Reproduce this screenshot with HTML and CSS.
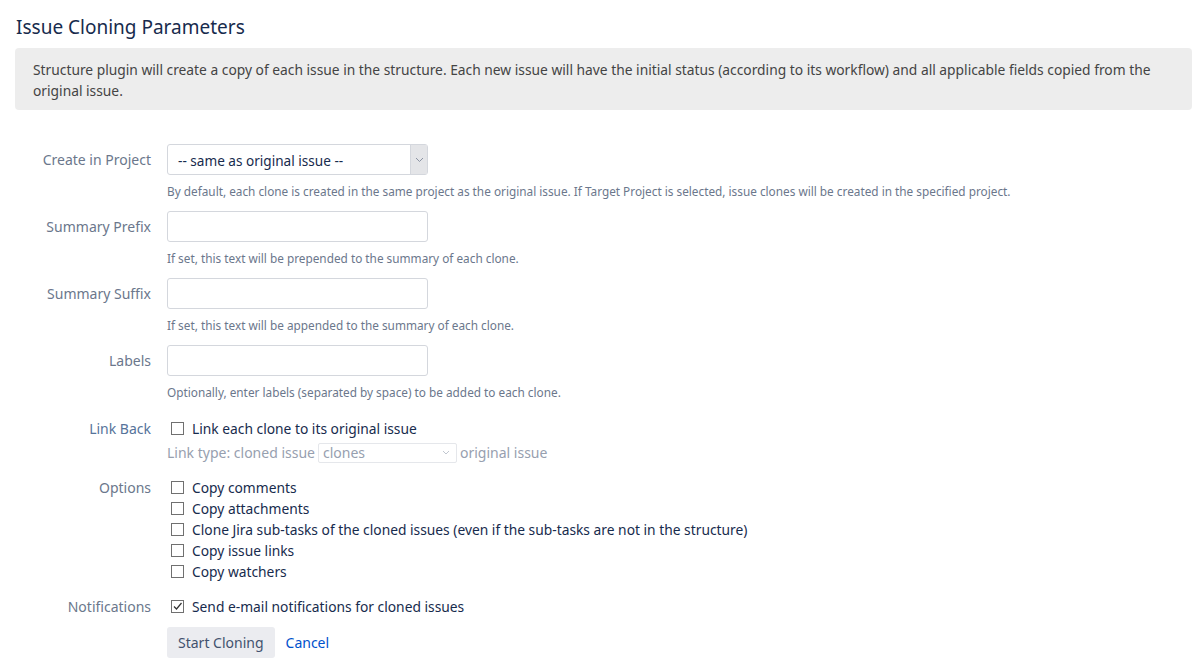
FILE: index.html
```html
<!DOCTYPE html>
<html lang="en">
<head>
  <meta charset="UTF-8">
  <title>Issue Cloning Parameters</title>
  <link rel="stylesheet" href="styles.css">
</head>
<body>
  <div class="page">
    <h1>Issue Cloning Parameters</h1>
    <div class="info">
      Structure plugin will create a copy of each issue in the structure. Each new issue will have the initial status (according to its workflow) and all applicable fields copied from the original issue.
    </div>

    <form class="form">
      <div class="row">
        <div class="label">Create in Project</div>
        <div class="field">
          <div class="select">
            <span class="select-text">-- same as original issue --</span>
            <span class="select-arrow">
              <svg width="9" height="6" viewBox="0 0 9 6"><path d="M1 1l3.5 3.5L8 1" fill="none" stroke="#8b93a3" stroke-width="1"/></svg>
            </span>
          </div>
          <div class="desc">By default, each clone is created in the same project as the original issue. If Target Project is selected, issue clones will be created in the specified project.</div>
        </div>
      </div>

      <div class="row">
        <div class="label">Summary Prefix</div>
        <div class="field">
          <div class="text-input"></div>
          <div class="desc">If set, this text will be prepended to the summary of each clone.</div>
        </div>
      </div>

      <div class="row">
        <div class="label">Summary Suffix</div>
        <div class="field">
          <div class="text-input"></div>
          <div class="desc">If set, this text will be appended to the summary of each clone.</div>
        </div>
      </div>

      <div class="row">
        <div class="label">Labels</div>
        <div class="field">
          <div class="text-input"></div>
          <div class="desc">Optionally, enter labels (separated by space) to be added to each clone.</div>
        </div>
      </div>

      <div class="row row-check row-linkback">
        <div class="label label-link">Link Back</div>
        <div class="field">
          <div class="check"><span class="box"></span>Link each clone to its original issue</div>
          <div class="link-type">
            Link type: cloned issue
            <span class="mini-select">clones
              <svg width="8" height="5" viewBox="0 0 8 5"><path d="M1 1l3 3 3-3" fill="none" stroke="#c1c7d0" stroke-width="1"/></svg>
            </span>
            original issue
          </div>
        </div>
      </div>

      <div class="row row-check">
        <div class="label">Options</div>
        <div class="field">
          <div class="check"><span class="box"></span>Copy comments</div>
          <div class="check"><span class="box"></span>Copy attachments</div>
          <div class="check"><span class="box"></span>Clone Jira sub-tasks of the cloned issues (even if the sub-tasks are not in the structure)</div>
          <div class="check"><span class="box"></span>Copy issue links</div>
          <div class="check"><span class="box"></span>Copy watchers</div>
        </div>
      </div>

      <div class="row row-check row-notify">
        <div class="label">Notifications</div>
        <div class="field">
          <div class="check"><span class="box checked">
            <svg width="11" height="11" viewBox="0 0 11 11"><path d="M2 5.5l2.5 2.5L9.5 2" fill="none" stroke="#333" stroke-width="1.2"/></svg>
          </span>Send e-mail notifications for cloned issues</div>
        </div>
      </div>

      <div class="row row-buttons">
        <div class="label"></div>
        <div class="field buttons">
          <span class="button">Start Cloning</span>
          <a class="cancel" href="#">Cancel</a>
        </div>
      </div>
    </form>
  </div>
</body>
</html>
```

FILE: styles.css
```css
body { margin: 0; font-family: "Noto Sans", "Open Sans", Arial, sans-serif; color: #172b4d; background: #fff; }
.page { padding: 15px 8px 0 15px; }
h1 { font-size: 19px; font-weight: 400; line-height: 24px; margin: 0 0 9px 1px; color: #172b4d; }
.info { background: #ededed; border-radius: 4px; padding: 11px 18px 9px 18px; font-size: 13.8px; line-height: 21px; color: #444; }

.form { margin-top: 34px; display: flex; flex-direction: column; }
.row { display: grid; grid-template-columns: 136px 1fr; column-gap: 16px; margin-bottom: 12px; }
.label { font-size: 14px; color: #6b778c; text-align: right; line-height: 31px; }
.label-link { color: #56739a; }
.field { display: flex; flex-direction: column; align-items: flex-start; }

.select { width: 261px; height: 31px; box-sizing: border-box; border: 1px solid #d4d7dd; border-radius: 3px; display: flex; align-items: stretch; }
.select-text { flex: 1; font-size: 13.6px; line-height: 31px; padding-left: 10px; color: #172b4d; }
.select-arrow { width: 16px; background: #e4e5e8; border-left: 1px solid #d4d7dd; display: flex; align-items: center; justify-content: center; }
.text-input { width: 261px; height: 31px; box-sizing: border-box; border: 1px solid #d4d7dd; border-radius: 3px; }
.desc { font-size: 11.8px; line-height: 16px; color: #6b778c; margin-top: 8px; }

.row-check { margin-bottom: 0; }
.row-check .label { line-height: 21px; }
.row-linkback { margin-top: 6px; }
.row-notify { margin-top: 14px; }
.check { display: flex; align-items: center; font-size: 13.8px; line-height: 21px; color: #172b4d; }
.box { width: 13px; height: 13px; box-sizing: border-box; border: 1px solid #707070; background: #fff; margin: 0 8px 0 4px; display: flex; align-items: center; justify-content: center; }
.link-type { display: flex; align-items: center; font-size: 14px; line-height: 21px; color: #97a0af; margin-top: 3px; margin-bottom: 14px; gap: 3px; }
.mini-select { width: 139px; height: 20px; box-sizing: border-box; border: 1px solid #e5e7eb; border-radius: 2px; display: flex; align-items: center; justify-content: space-between; padding: 0 6px 0 4px; color: #97a0af; }

.row-buttons { margin-top: 10px; }
.buttons { flex-direction: row; align-items: center; gap: 11px; }
.button { background: #ebecf0; color: #42526e; border-radius: 3px; font-size: 14px; line-height: 31px; padding: 0 11px; }
.cancel { color: #0052cc; text-decoration: none; font-size: 14px; }
```
